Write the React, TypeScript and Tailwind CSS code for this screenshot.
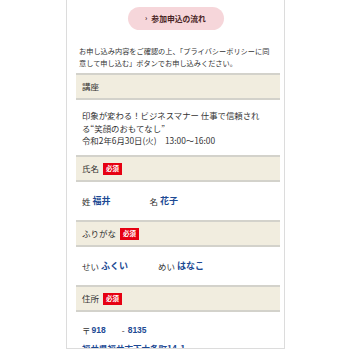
import React from "react";

const font = { fontFamily: '"Noto Sans CJK JP", "Noto Sans", sans-serif' };

function Required() {
  return (
    <span className="ml-[4px] inline-flex h-[12px] items-center bg-[#e60012] px-[3px] text-[6.5px] font-bold leading-none text-white">
      必須
    </span>
  );
}

function Head({ label, required }: { label: string; required?: boolean }) {
  return (
    <div className="flex h-[27px] items-center border-y-2 border-[#d3d2cb] bg-[#f1eddf] pl-[6px] text-[8.5px] text-[#333]">
      <span>{label}</span>
      {required && <Required />}
    </div>
  );
}

function Pair({ a, av, b, bv, gap }: { a: string; av: string; b: string; bv: string; gap: string }) {
  return (
    <div className="flex h-[38px] items-center pl-[6px] text-[8.5px] text-[#333]">
      <span>{a}</span>
      <span className="ml-[2px] text-[9px] font-bold text-[#1d4a94]">{av}</span>
      <span className={gap}>{b}</span>
      <span className="ml-[2px] text-[9px] font-bold text-[#1d4a94]">{bv}</span>
    </div>
  );
}

export default function App() {
  return (
    <div className="h-[350px] w-[350px] bg-white" style={font}>
      <div className="ml-[66px] h-[349px] w-[219px] overflow-hidden border-x border-b border-[#dcdcdc]">
        <div className="flex justify-center pt-[7px]">
          <div className="flex h-[23px] w-[96px] items-center justify-center rounded-full bg-[#f6d6da] text-[7.8px] font-bold text-[#4a2525]">
            <span className="mr-[4px] text-[7px]">›</span>
            参加申込の流れ
          </div>
        </div>

        <p className="mt-[16px] whitespace-nowrap pl-[12px] text-[7.2px] leading-[11.5px] text-[#333]">
          お申し込み内容をご確認の上、「プライバシーポリシーに同
          <br />
          意して申し込む」ボタンでお申し込みください。
        </p>

        <div className="mt-[4px] ml-[9px] mr-[4px]">
          <Head label="講座" />
          <div className="h-[55px] whitespace-nowrap pl-[6px] pt-[9px] text-[8.4px] leading-[12.5px] text-[#333]">
            <p>
              印象が変わる！ビジネスマナー 仕事で信頼され
              <br />
              る“笑顔のおもてなし”
            </p>
            <p>令和2年6月30日(火)　13:00～16:00</p>
          </div>

          <Head label="氏名" required />
          <Pair a="姓" av="福井" b="名" bv="花子" gap="ml-[39px]" />

          <Head label="ふりがな" required />
          <Pair a="せい" av="ふくい" b="めい" bv="はなこ" gap="ml-[30px]" />

          <Head label="住所" required />
          <div className="pl-[6px] pt-[11px] text-[8.5px] font-bold text-[#1d4a94]">
            <div className="flex h-[14px] items-center">
              <span className="font-normal text-[#333]">〒</span>
              <span className="ml-[1px]" style={{ fontFamily: '"Liberation Sans", sans-serif' }}>918</span>
              <span className="ml-[16px] font-normal text-[#333]">-</span>
              <span className="ml-[3px]" style={{ fontFamily: '"Liberation Sans", sans-serif' }}>8135</span>
            </div>
            <div className="mt-[5px] h-[14px]">福井県福井市下六条町14-1</div>
          </div>
        </div>
      </div>
    </div>
  );
}
